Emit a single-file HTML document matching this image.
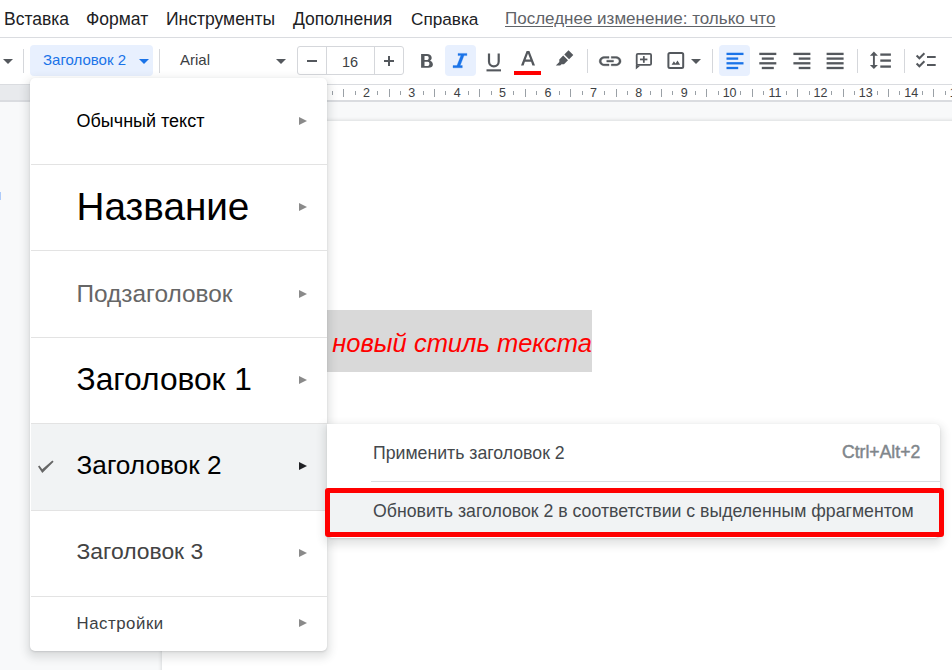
<!DOCTYPE html>
<html><head><meta charset="utf-8">
<style>
*{margin:0;padding:0;box-sizing:border-box}
html,body{width:952px;height:670px;overflow:hidden;background:#fff;font-family:"Liberation Sans",sans-serif;position:relative}
.a{position:absolute;white-space:nowrap}
.mb{font-size:17.5px;color:#202124;top:8.6px;line-height:20px}
.line{position:absolute;height:1px;background:#dadce0}
.vdiv{position:absolute;width:1px;background:#d5d7db;top:49px;height:24px}
.caret{position:absolute;width:0;height:0;border-left:5px solid transparent;border-right:5px solid transparent;border-top:5px solid #54585d}
svg{position:absolute;overflow:visible}
.tick{position:absolute;width:1px;background:#9aa0a6}
.rn{position:absolute;font-size:12.5px;color:#3c4043;top:86px;line-height:14px;text-align:center;width:20px}
.menu{position:absolute;left:30px;top:78px;width:297px;height:573px;background:#fff;border-radius:5px;box-shadow:0 4px 8px 3px rgba(60,64,67,.14),0 1px 2px rgba(60,64,67,.16)}
.sep{position:absolute;left:1px;width:296px;height:1px;background:#e3e3e3}
.arr{position:absolute;left:269px;width:0;height:0;border-top:4px solid transparent;border-bottom:4px solid transparent;border-left:8.5px solid #8a8a8a}
.mi{position:absolute;left:46.5px;white-space:nowrap;color:#000;line-height:1}
.sub{position:absolute;left:327px;top:424px;width:613px;height:114px;background:#fff;border-radius:0 5px 5px 5px;box-shadow:0 4px 8px 3px rgba(60,64,67,.14),0 1px 2px rgba(60,64,67,.16)}
.st{position:absolute;white-space:nowrap;font-size:17.7px;color:#44484c;line-height:1}
</style></head><body>
<!-- menubar -->
<div class="a mb" style="left:4px">Вставка</div>
<div class="a mb" style="left:86px">Формат</div>
<div class="a mb" style="left:166px">Инструменты</div>
<div class="a mb" style="left:293px">Дополнения</div>
<div class="a mb" style="left:411px;font-size:17.2px">Справка</div>
<div class="a mb" style="left:505px;font-size:17px;color:#5f6368;text-decoration:underline;text-underline-offset:2px">Последнее изменение: только что</div>
<div class="line" style="left:0;top:37px;width:952px"></div>

<!-- toolbar -->
<div class="caret" style="left:3px;top:59px"></div>
<div class="vdiv" style="left:23px"></div>
<div class="a" style="left:30px;top:45px;width:123px;height:31px;background:#e8f0fe;border-radius:4px"></div>
<div class="a" style="left:43px;top:52px;font-size:15px;line-height:16px;color:#1a73e8">Заголовок 2</div>
<div class="caret" style="left:139px;top:59px;border-top-color:#1a73e8"></div>
<div class="vdiv" style="left:159px"></div>
<div class="a" style="left:180px;top:52px;font-size:15px;line-height:16px;color:#3c4043">Arial</div>
<div class="caret" style="left:276px;top:59px"></div>
<div class="a" style="left:297px;top:46px;width:107px;height:29px;border:1px solid #d5d7db;border-radius:3px"></div>
<div class="a" style="left:326px;top:47px;width:1px;height:27px;background:#d5d7db"></div>
<div class="a" style="left:374px;top:47px;width:1px;height:27px;background:#d5d7db"></div>
<div class="a" style="left:307px;top:60px;width:10px;height:2px;background:#54585d"></div>
<div class="a" style="left:342px;top:54px;font-size:14.5px;line-height:16px;color:#3c4043">16</div>
<div class="a" style="left:384px;top:60px;width:10px;height:2px;background:#54585d"></div>
<div class="a" style="left:388px;top:56px;width:2px;height:10px;background:#54585d"></div>
<!-- bold -->
<svg style="left:416px;top:50px" width="20" height="20"><path fill="#54585d" fill-rule="evenodd" d="M5.1 3.95H11C13.7 3.95 15.7 5.4 15.7 7.8C15.7 9.1 15 10.2 14 10.75C15.6 11.3 16.9 12.6 16.9 14.5C16.9 16.7 15.1 17.8 12.4 17.8H5.1ZM8.5 6.1V9.9H11.3C12.3 9.9 12.7 9.1 12.7 8C12.7 6.9 12.2 6.1 11.3 6.1ZM8.5 11.8V15.9H11.8C12.9 15.9 13.4 15.1 13.4 13.85C13.4 12.6 12.9 11.8 11.8 11.8Z"/></svg>
<!-- italic -->
<div class="a" style="left:445px;top:45px;width:31px;height:31px;background:#e8f0fe;border-radius:4px"></div>
<svg style="left:445px;top:45px" width="31" height="31"><path fill="#1a73e8" stroke="#1a73e8" stroke-width="0.3" stroke-linejoin="round" d="M13 8.4H21.9V10.6H19L15.2 20.5H17.3V22.8H8V20.5H12L15.9 10.6H13Z"/></svg>
<!-- underline -->
<svg style="left:480px;top:46px" width="30" height="30"><path fill="none" stroke="#54585d" stroke-width="2.2" d="M9 7.4V15.6a4.85 4.85 0 0 0 9.7 0V7.4"/><rect x="6.5" y="23.3" width="14.5" height="2.1" fill="#54585d"/></svg>
<!-- text color -->
<svg style="left:509px;top:46px" width="36" height="30"><path fill="#54585d" d="M17.6 5h2.8l5.6 14.4h-2.6l-1.3-3.6h-6.2l-1.3 3.6h-2.6zM16.7 13.6h4.6L19 7.4z"/><rect x="5" y="25" width="27" height="4" fill="#ff0000"/></svg>
<!-- highlighter -->
<svg style="left:550px;top:46px" width="30" height="30"><path fill="#54585d" d="M18.5 4.2l4.8 4.8-4.2 4.2-4.8-4.8zM13.2 9.5l4.8 4.8-4 4h-2.5l-1.3 1.3h-4.4l3.5-3.5v-2.5z"/></svg>
<div class="vdiv" style="left:587px"></div>
<!-- link -->
<svg style="left:596.7px;top:49.6px" width="24" height="24" viewBox="0 0 24 24"><g transform="scale(1.095 0.93)"><path fill="#54585d" stroke="#54585d" stroke-width="0.35" d="M3.9 12c0-1.71 1.39-3.1 3.1-3.1h4V7H7c-2.76 0-5 2.240-5 5s2.24 5 5 5h4v-1.9H7c-1.71 0-3.1-1.39-3.1-3.1zM8.9 13h6.2v-2H8.9v2zm8.1-6h-4v1.9h4c1.71 0 3.1 1.39 3.1 3.1s-1.39 3.1-3.1 3.1h-4V17h4c2.76 0 5-2.24 5-5s-2.24-5-5-5z"/></g></svg>
<!-- comment -->
<svg style="left:630px;top:46px" width="28" height="30"><rect x="6.7" y="7.9" width="14.4" height="11" rx="1.2" fill="none" stroke="#54585d" stroke-width="1.8"/><path fill="#54585d" d="M5.8 18.5V23.4L10.2 19.8H7.6V18.5z"/><rect x="10" y="12.55" width="7.4" height="1.75" fill="#54585d"/><rect x="12.95" y="10.1" width="1.75" height="6.7" fill="#54585d"/></svg>
<!-- image -->
<svg style="left:664px;top:46px" width="40" height="30"><rect x="4.4" y="7" width="14.8" height="15" rx="1.5" fill="none" stroke="#54585d" stroke-width="2"/><path fill="#54585d" d="M7.6 18.7l2.3-3.5 1.6 2.2 2-3 2.6 4.3z"/></svg>
<div class="caret" style="left:691px;top:59px"></div>
<div class="vdiv" style="left:712px"></div>
<!-- align -->
<div class="a" style="left:719px;top:45px;width:31px;height:31px;background:#e8f0fe;border-radius:4px"></div>
<svg style="left:719px;top:45px" width="31" height="31"><g fill="#1a73e8"><rect x="7.5" y="7.75" width="17" height="2.3"/><rect x="7.5" y="12.45" width="11.7" height="2.3"/><rect x="7.5" y="17.15" width="17" height="2.3"/><rect x="7.5" y="21.85" width="11.7" height="2.3"/></g></svg>
<svg style="left:752px;top:45px" width="31" height="31"><g fill="#54585d"><rect x="7.3" y="7.75" width="17" height="2.3"/><rect x="9.8" y="12.45" width="12" height="2.3"/><rect x="7.3" y="17.15" width="17" height="2.3"/><rect x="9.8" y="21.85" width="12" height="2.3"/></g></svg>
<svg style="left:786px;top:45px" width="31" height="31"><g fill="#54585d"><rect x="7.4" y="7.75" width="17" height="2.3"/><rect x="12.7" y="12.45" width="11.7" height="2.3"/><rect x="7.4" y="17.15" width="17" height="2.3"/><rect x="12.7" y="21.85" width="11.7" height="2.3"/></g></svg>
<svg style="left:819px;top:45px" width="31" height="31"><g fill="#54585d"><rect x="7.6" y="7.75" width="17" height="2.3"/><rect x="7.6" y="12.45" width="17" height="2.3"/><rect x="7.6" y="17.15" width="17" height="2.3"/><rect x="7.6" y="21.85" width="17" height="2.3"/></g></svg>
<div class="vdiv" style="left:857px"></div>
<!-- line spacing -->
<svg style="left:864px;top:45px" width="31" height="31"><path fill="#54585d" d="M9.9 6.6L13.9 10.7H10.85V19.9H13.9L9.9 24.1L5.9 19.9H8.95V10.7H5.9Z"/><g fill="#54585d"><rect x="16.3" y="8.45" width="10.6" height="2.3"/><rect x="16.3" y="14.45" width="10.6" height="2.3"/><rect x="16.3" y="20.45" width="10.6" height="2.3"/></g></svg>
<div class="vdiv" style="left:904px"></div>
<!-- checklist -->
<svg style="left:910px;top:45px" width="31" height="31"><path fill="none" stroke="#54585d" stroke-width="2" d="M6.6 10.5l2.8 2.8 5-5M6.6 18.5l2.8 2.8 5-5"/><g fill="#54585d"><rect x="17" y="11" width="8.7" height="2"/><rect x="17" y="19" width="8.7" height="2"/></g></svg>

<!-- ruler -->
<div class="a" style="left:0;top:84px;width:952px;height:18px;background:#fff;border-top:1px solid #dadce0;border-bottom:2px solid #dadce0"></div>
<div class="a" style="left:0;top:85px;width:276px;height:15px;background:#e8eaed"></div>
<div class="a" style="left:0;top:102px;width:952px;height:568px;background:#f8f9fa"></div>
<div class="a" style="left:0;top:192px;width:1px;height:8px;background:#aecbfa"></div>
<div class="a" style="left:162px;top:121px;width:800px;height:560px;background:#fff;box-shadow:0 0 3px 1px rgba(60,64,67,.15)"></div>
<div class="rn" style="left:129.4px">3</div>
<div class="tick" style="left:150px;top:91px;height:4px"></div>
<div class="tick" style="left:162px;top:89px;height:8px"></div>
<div class="tick" style="left:173px;top:91px;height:4px"></div>
<div class="rn" style="left:174.8px">2</div>
<div class="tick" style="left:196px;top:91px;height:4px"></div>
<div class="tick" style="left:207px;top:89px;height:8px"></div>
<div class="tick" style="left:218px;top:91px;height:4px"></div>
<div class="rn" style="left:220.2px">1</div>
<div class="tick" style="left:241px;top:91px;height:4px"></div>
<div class="tick" style="left:252px;top:89px;height:8px"></div>
<div class="tick" style="left:264px;top:91px;height:4px"></div>
<div class="tick" style="left:286px;top:91px;height:4px"></div>
<div class="tick" style="left:298px;top:89px;height:8px"></div>
<div class="tick" style="left:309px;top:91px;height:4px"></div>
<div class="rn" style="left:311.0px">1</div>
<div class="tick" style="left:332px;top:91px;height:4px"></div>
<div class="tick" style="left:343px;top:89px;height:8px"></div>
<div class="tick" style="left:355px;top:91px;height:4px"></div>
<div class="rn" style="left:356.4px">2</div>
<div class="tick" style="left:377px;top:91px;height:4px"></div>
<div class="tick" style="left:389px;top:89px;height:8px"></div>
<div class="tick" style="left:400px;top:91px;height:4px"></div>
<div class="rn" style="left:401.8px">3</div>
<div class="tick" style="left:423px;top:91px;height:4px"></div>
<div class="tick" style="left:434px;top:89px;height:8px"></div>
<div class="tick" style="left:445px;top:91px;height:4px"></div>
<div class="rn" style="left:447.2px">4</div>
<div class="tick" style="left:468px;top:91px;height:4px"></div>
<div class="tick" style="left:479px;top:89px;height:8px"></div>
<div class="tick" style="left:491px;top:91px;height:4px"></div>
<div class="rn" style="left:492.6px">5</div>
<div class="tick" style="left:513px;top:91px;height:4px"></div>
<div class="tick" style="left:525px;top:89px;height:8px"></div>
<div class="tick" style="left:536px;top:91px;height:4px"></div>
<div class="rn" style="left:538.0px">6</div>
<div class="tick" style="left:559px;top:91px;height:4px"></div>
<div class="tick" style="left:570px;top:89px;height:8px"></div>
<div class="tick" style="left:582px;top:91px;height:4px"></div>
<div class="rn" style="left:583.4px">7</div>
<div class="tick" style="left:604px;top:91px;height:4px"></div>
<div class="tick" style="left:616px;top:89px;height:8px"></div>
<div class="tick" style="left:627px;top:91px;height:4px"></div>
<div class="rn" style="left:628.8px">8</div>
<div class="tick" style="left:650px;top:91px;height:4px"></div>
<div class="tick" style="left:661px;top:89px;height:8px"></div>
<div class="tick" style="left:672px;top:91px;height:4px"></div>
<div class="rn" style="left:674.2px">9</div>
<div class="tick" style="left:695px;top:91px;height:4px"></div>
<div class="tick" style="left:706px;top:89px;height:8px"></div>
<div class="tick" style="left:718px;top:91px;height:4px"></div>
<div class="rn" style="left:719.6px">10</div>
<div class="tick" style="left:740px;top:91px;height:4px"></div>
<div class="tick" style="left:752px;top:89px;height:8px"></div>
<div class="tick" style="left:763px;top:91px;height:4px"></div>
<div class="rn" style="left:765.0px">11</div>
<div class="tick" style="left:786px;top:91px;height:4px"></div>
<div class="tick" style="left:797px;top:89px;height:8px"></div>
<div class="tick" style="left:809px;top:91px;height:4px"></div>
<div class="rn" style="left:810.4px">12</div>
<div class="tick" style="left:831px;top:91px;height:4px"></div>
<div class="tick" style="left:843px;top:89px;height:8px"></div>
<div class="tick" style="left:854px;top:91px;height:4px"></div>
<div class="rn" style="left:855.8px">13</div>
<div class="tick" style="left:877px;top:91px;height:4px"></div>
<div class="tick" style="left:888px;top:89px;height:8px"></div>
<div class="tick" style="left:899px;top:91px;height:4px"></div>
<div class="rn" style="left:901.2px">14</div>
<div class="tick" style="left:922px;top:91px;height:4px"></div>
<div class="tick" style="left:933px;top:89px;height:8px"></div>
<div class="tick" style="left:945px;top:91px;height:4px"></div>
<div class="rn" style="left:946.6px">15</div>
<div class="tick" style="left:967px;top:91px;height:4px"></div>

<!-- document text -->
<div class="a" style="left:280px;top:310px;width:312px;height:62px;background:#d9d9d9;overflow:hidden"><div class="a" style="right:0;top:18px;font:italic 25.5px/30px 'Liberation Sans';color:#f00">Применяем новый стиль текста</div></div>

<!-- dropdown menu -->
<div class="menu">
 <div class="sep" style="top:86px"></div>
 <div class="sep" style="top:172px"></div>
 <div class="sep" style="top:259px"></div>
 <div class="sep" style="top:345px"></div>
 <div class="a" style="left:1px;top:346px;width:296px;height:86px;background:#f1f3f4"></div>
 <div class="sep" style="top:432px"></div>
 <div class="sep" style="top:518px"></div>
 <div class="mi" style="top:34px;font-size:18px">Обычный текст</div>
 <div class="mi" style="top:110px;font-size:38.7px">Название</div>
 <div class="mi" style="top:204px;font-size:24.4px;color:#666">Подзаголовок</div>
 <div class="mi" style="top:286px;font-size:31.7px">Заголовок 1</div>
 <div class="mi" style="top:374px;font-size:26.2px">Заголовок 2</div>
 <div class="mi" style="top:462px;font-size:22.9px;color:#434343">Заголовок 3</div>
 <div class="mi" style="top:538px;font-size:16.8px;letter-spacing:0.55px;color:#3c4043">Настройки</div>
 <div class="arr" style="top:39px"></div>
 <div class="arr" style="top:125px"></div>
 <div class="arr" style="top:212px"></div>
 <div class="arr" style="top:298px"></div>
 <div class="arr" style="top:384px;border-left-color:#202124"></div>
 <div class="arr" style="top:471px"></div>
 <div class="arr" style="top:541px"></div>
 <svg style="left:7px;top:381px" width="18" height="15"><path fill="#666" d="M1 7.6L2.4 6.5 5.2 10.3 15.4 1.5 16.6 2.7 5.3 14z"/></svg>
</div>
<div class="sub">
 <div class="st" style="left:46px;top:20.5px">Применить заголовок 2</div>
 <div class="st" style="left:515px;top:19.5px;font-size:17.6px;-webkit-text-stroke:0.45px #80868b;color:#80868b">Ctrl+Alt+2</div>
 <div class="a" style="left:44px;top:57px;width:569px;height:1px;background:#dadce0"></div>
</div>
<div class="a" style="left:325px;top:488px;width:619px;height:49px;border:5px solid #f00;border-radius:3px;background:#f1f3f4"></div>
<div class="st" style="left:373px;top:502.5px">Обновить заголовок 2 в соответствии с выделенным фрагментом</div>
</body></html>
